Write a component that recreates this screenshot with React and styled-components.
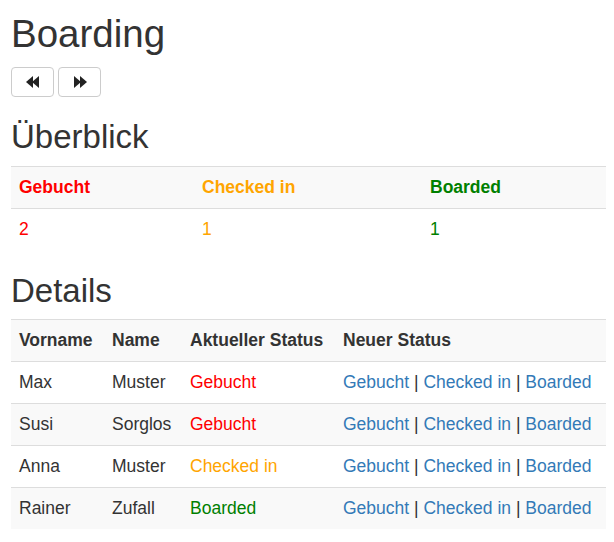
import React from "react";
import styled, { createGlobalStyle } from "styled-components";

const GlobalStyle = createGlobalStyle`
  body {
    margin: 0;
    background: #fff;
    color: #333;
    font-family: "Liberation Sans", Arial, sans-serif;
    font-size: 17.5px;
  }
`;

const STATUS_COLORS = {
  Gebucht: "#ff0000",
  "Checked in": "#ffa500",
  Boarded: "#008000",
};

const Page = styled.div`
  padding: 13px 8px 0 11px;
`;

const Title = styled.h1`
  margin: 0 0 12px;
  font-size: 38.5px;
  font-weight: 500;
  line-height: 1.1;
`;

const Heading = styled.h2`
  margin: 22px 0 10px;
  font-size: 33px;
  font-weight: 500;
  line-height: 1.1;
`;

const Toolbar = styled.div`
  display: flex;
  gap: 4px;
`;

const NavButton = styled.button`
  display: flex;
  align-items: center;
  justify-content: center;
  width: 43px;
  height: 30px;
  padding: 0;
  background: #fff;
  border: 1px solid #ccc;
  border-radius: 4px;
  color: #333;
`;

const Table = styled.table`
  width: 100%;
  border-collapse: collapse;
  border-spacing: 0;
  margin-bottom: 23px;

  tbody tr:nth-of-type(odd) {
    background: #f9f9f9;
  }
`;

const Cell = styled.td`
  padding: 8px;
  line-height: 25px;
  border-top: 1px solid #ddd;
  text-align: left;
  vertical-align: top;
  white-space: nowrap;
  color: ${(p) => p.$color || "#333"};
`;

const HeadCell = styled(Cell).attrs({ as: "th" })`
  font-weight: bold;
`;

const Link = styled.a`
  color: #337ab7;
  text-decoration: none;
  cursor: pointer;
`;

const Sep = styled.span`
  color: #333;
`;

const BackIcon = () => (
  <svg width="14" height="12" viewBox="0 0 14 12">
    <polygon points="0,6 7,0 7,12" fill="#222" />
    <polygon points="6,6 13,0 13,12" fill="#222" />
  </svg>
);

const ForwardIcon = () => (
  <svg width="14" height="12" viewBox="0 0 14 12">
    <polygon points="1,0 8,6 1,12" fill="#222" />
    <polygon points="7,0 14,6 7,12" fill="#222" />
  </svg>
);

const passengers = [
  { first: "Max", last: "Muster", status: "Gebucht" },
  { first: "Susi", last: "Sorglos", status: "Gebucht" },
  { first: "Anna", last: "Muster", status: "Checked in" },
  { first: "Rainer", last: "Zufall", status: "Boarded" },
];

const statuses = ["Gebucht", "Checked in", "Boarded"];

export default function App() {
  const counts = statuses.map(
    (s) => passengers.filter((p) => p.status === s).length
  );

  return (
    <Page>
      <GlobalStyle />
      <Title>Boarding</Title>
      <Toolbar>
        <NavButton>
          <BackIcon />
        </NavButton>
        <NavButton>
          <ForwardIcon />
        </NavButton>
      </Toolbar>

      <Heading>Überblick</Heading>
      <Table>
        <colgroup>
          <col style={{ width: 183 }} />
          <col style={{ width: 228 }} />
          <col />
        </colgroup>
        <tbody>
          <tr>
            {statuses.map((s) => (
              <HeadCell key={s} $color={STATUS_COLORS[s]}>
                {s}
              </HeadCell>
            ))}
          </tr>
          <tr>
            {statuses.map((s, i) => (
              <Cell key={s} $color={STATUS_COLORS[s]}>
                {counts[i]}
              </Cell>
            ))}
          </tr>
        </tbody>
      </Table>

      <Heading>Details</Heading>
      <Table>
        <colgroup>
          <col style={{ width: 93 }} />
          <col style={{ width: 78 }} />
          <col style={{ width: 153 }} />
          <col />
        </colgroup>
        <tbody>
          <tr>
            <HeadCell>Vorname</HeadCell>
            <HeadCell>Name</HeadCell>
            <HeadCell>Aktueller Status</HeadCell>
            <HeadCell>Neuer Status</HeadCell>
          </tr>
          {passengers.map((p) => (
            <tr key={p.first}>
              <Cell>{p.first}</Cell>
              <Cell>{p.last}</Cell>
              <Cell $color={STATUS_COLORS[p.status]}>{p.status}</Cell>
              <Cell>
                <Link>Gebucht</Link> <Sep>|</Sep> <Link>Checked in</Link>{" "}
                <Sep>|</Sep> <Link>Boarded</Link>
              </Cell>
            </tr>
          ))}
        </tbody>
      </Table>
    </Page>
  );
}
